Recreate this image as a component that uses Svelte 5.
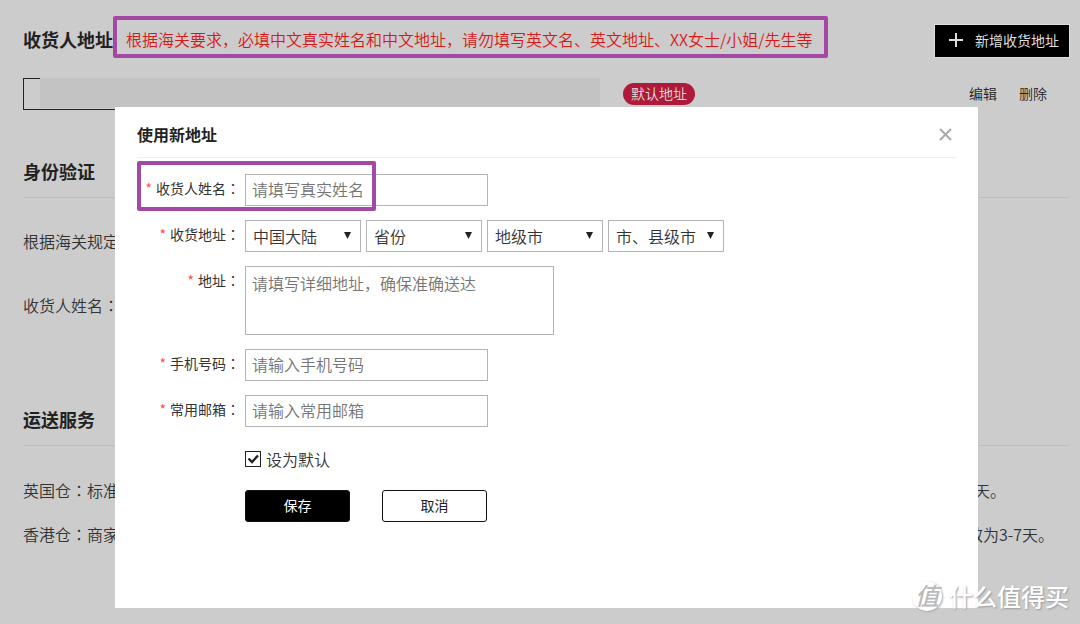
<script lang="ts">
  const regions = [
    { id: 'country', label: '国家', value: '中国大陆' },
    { id: 'province', label: '省份', value: '省份' },
    { id: 'city', label: '地级市', value: '地级市' },
    { id: 'county', label: '市、县级市', value: '市、县级市' },
  ];

  let name = $state('');
  let detail = $state('');
  let phone = $state('');
  let email = $state('');
  let isDefault = $state(true);
  let open = $state(true);

  function close() {
    open = false;
  }

  function save(event: SubmitEvent) {
    event.preventDefault();
    close();
  }
</script>

<svelte:head>
  <title>收货人地址</title>
</svelte:head>

<!-- zh-TW spans centre the colon in its cell -->
<div class="page" lang="zh-CN">
  <header class="page-header">
    <h2>收货人地址</h2>
    <p class="notice">根据海关要求，必填中文真实姓名和中文地址，请勿填写英文名、英文地址、XX女士/小姐/先生等</p>
    <button class="add" type="button" onclick={() => (open = true)}>
      <svg width="14" height="14" viewBox="0 0 14 14" aria-hidden="true">
        <path d="M7 0V14M0 7H14" stroke="#ddd" stroke-width="2" />
      </svg>
      新增收货地址
    </button>
  </header>

  <div class="address">
    <div class="address-box"><span class="redacted"></span></div>
    <span class="badge">默认地址</span>
    <nav class="actions">
      <a href="#edit">编辑</a>
      <a href="#delete">删除</a>
    </nav>
  </div>

  <section class="identity">
    <h2>身份验证</h2>
    <p>根据海关规定</p>
    <p>收货人姓名<span lang="zh-TW">：</span></p>
  </section>

  <section class="shipping">
    <h2>运送服务</h2>
    <p class="uk">
      <span>英国仓<span lang="zh-TW">：</span>标准</span>
      <span>天。</span>
    </p>
    <p class="hk">
      <span>香港仓<span lang="zh-TW">：</span>商家</span>
      <span>效为3-7天。</span>
    </p>
  </section>

  {#if open}
    <div class="overlay">
      <div class="modal" role="dialog" aria-labelledby="modal-title">
        <div class="modal-header">
          <h3 id="modal-title">使用新地址</h3>
          <button class="close" type="button" aria-label="关闭" onclick={close}>
            <svg width="13" height="13" viewBox="0 0 13 13" aria-hidden="true">
              <path d="M1 1L12 12M12 1L1 12" stroke="#aaa" stroke-width="2" />
            </svg>
          </button>
        </div>

        <form onsubmit={save}>
          <div class="row">
            <label for="name"><i>*</i>收货人姓名<span lang="zh-TW">：</span></label>
            <input id="name" class="text" type="text" placeholder="请填写真实姓名" bind:value={name} />
            <span class="highlight"></span>
          </div>
          <div class="row">
            <label for="country"><i>*</i>收货地址<span lang="zh-TW">：</span></label>
            <div class="selects">
              {#each regions as region (region.id)}
                <div class="select">
                  <select id={region.id} aria-label={region.label}>
                    <option>{region.value}</option>
                  </select>
                  <svg width="7" height="7" viewBox="0 0 7 7" aria-hidden="true">
                    <path d="M0 0H7L3.5 7Z" fill="#222" />
                  </svg>
                </div>
              {/each}
            </div>
          </div>
          <div class="row">
            <label for="detail"><i>*</i>地址<span lang="zh-TW">：</span></label>
            <textarea id="detail" placeholder="请填写详细地址，确保准确送达" bind:value={detail}></textarea>
          </div>
          <div class="row">
            <label for="phone"><i>*</i>手机号码<span lang="zh-TW">：</span></label>
            <input id="phone" class="text" type="tel" placeholder="请输入手机号码" bind:value={phone} />
          </div>
          <div class="row">
            <label for="email"><i>*</i>常用邮箱<span lang="zh-TW">：</span></label>
            <input id="email" class="text" type="email" placeholder="请输入常用邮箱" bind:value={email} />
          </div>

          <div class="default">
            <span class="check">
              <input id="default" type="checkbox" bind:checked={isDefault} />
              {#if isDefault}
                <svg width="16" height="16" viewBox="0 0 16 16" aria-hidden="true">
                  <path d="M3.5 7.5L7 11L13 4.5" fill="none" stroke="#222" stroke-width="2.4" />
                </svg>
              {/if}
            </span>
            <label for="default">设为默认</label>
          </div>

          <div class="buttons">
            <button class="save" type="submit">保存</button>
            <button class="cancel" type="button" onclick={close}>取消</button>
          </div>
        </form>
      </div>
    </div>
  {/if}

  <div class="watermark">
    <span class="logo">值</span>
    <span>什么值得买</span>
  </div>
</div>

<style>
:global(body) {
  margin: 0;
  background: #ccc;
}

.page,
.page button,
.page input,
.page select,
.page textarea {
  font-family: 'Noto Sans CJK SC', sans-serif;
}

.page {
  position: relative;
  box-sizing: border-box;
  min-height: 100vh;
  padding: 16px 11px 16px 23px;
  overflow: hidden;
  color: #333;
  font-size: 16px;
  font-weight: 350;
  line-height: 24px;
}

h2,
h3,
p {
  margin: 0;
}

h2 {
  color: #222;
  font-size: 18px;
  font-weight: 700;
  white-space: nowrap;
}

button,
select {
  cursor: pointer;
}

[lang='zh-TW'] {
  font-family: 'Noto Sans CJK TC', sans-serif;
}

.page-header {
  display: flex;
  align-items: center;
}

.page-header h2 {
  height: 42px;
  line-height: 46px;
}

.notice {
  padding: 7px 11px 3px 9px;
  border: 4px solid #a349a4;
  border-radius: 2px;
  color: #d61a1a;
  white-space: nowrap;
}

.add {
  display: flex;
  align-items: center;
  align-self: flex-end;
  gap: 12px;
  height: 32px;
  margin: 0 0 1px auto;
  padding: 0 10px 2px 14px;
  border: 0;
  outline: 1px solid #ddd;
  background: #000;
  color: #ddd;
  font-size: 14px;
  font-weight: 400;
  white-space: nowrap;
}

.address {
  display: flex;
  align-items: center;
  margin-top: 20px;
}

.address-box {
  position: relative;
  box-sizing: border-box;
  width: 577px;
  height: 32px;
  border: 1px solid #222;
}

.redacted {
  position: absolute;
  inset: -1px -1px 1px 16px;
  background: #c3c3c3;
}

.badge {
  margin-left: 23px;
  padding: 0 8px 2px;
  border-radius: 12px;
  background: #b01a3a;
  color: #ddd;
  font-size: 14px;
  line-height: 20px;
}

.actions {
  display: flex;
  gap: 22px;
  margin-left: auto;
  padding: 0 22px 2px 0;
}

.actions a {
  color: #222;
  font-size: 14px;
  text-decoration: none;
}

section h2 {
  padding-bottom: 2px;
  border-bottom: 1px solid #bdbdbd;
  line-height: 48px;
}

section p {
  white-space: nowrap;
}

.identity {
  margin-top: 37px;
}

.identity p {
  margin-top: 31px;
}

.identity p + p {
  margin-top: 40px;
}

.shipping {
  margin-top: 78px;
}

.shipping p {
  display: flex;
  justify-content: space-between;
  margin-top: 32px;
}

.shipping p + p {
  margin-top: 20px;
}

.uk {
  padding-right: 63px;
}

.hk {
  padding-right: 15px;
}

.overlay {
  position: absolute;
  inset: 0;
  padding: 107px 102px 16px 115px;
}

.modal {
  padding: 0 22px 86px;
  background: #fff;
}

.modal-header {
  box-sizing: border-box;
  display: flex;
  align-items: center;
  justify-content: space-between;
  height: 51px;
  padding-top: 4px;
  border-bottom: 1px solid #eee;
}

h3 {
  color: #222;
  font-size: 16px;
  font-weight: 700;
}

.close {
  display: flex;
  padding: 4px;
  border: 0;
  background: none;
}

form {
  display: flex;
  flex-direction: column;
  gap: 14px;
  padding-top: 16px;
}

.row {
  position: relative;
  display: flex;
  gap: 5px;
}

.row label {
  width: 103px;
  font-size: 14px;
  font-weight: 400;
  line-height: 28px;
  text-align: right;
  white-space: nowrap;
}

.row label i {
  margin-right: 4px;
  color: #ff4d4d;
  font-style: normal;
}

.text,
select,
textarea {
  box-sizing: border-box;
  margin: 0;
  border: 1px solid #b4b4b4;
  border-radius: 0;
  background: #fff;
  color: #333;
  font-size: 16px;
  font-weight: 350;
  outline: 0;
}

.text {
  width: 243px;
  height: 32px;
  padding: 0 6px 2px;
}

.text::placeholder,
textarea::placeholder {
  color: #757575;
  opacity: 1;
}

.highlight {
  position: absolute;
  top: -13px;
  left: 0;
  box-sizing: border-box;
  width: 239px;
  height: 50px;
  border: 4px solid #a349a4;
  border-radius: 2px;
  pointer-events: none;
}

.selects {
  display: flex;
  gap: 5px;
}

.select {
  position: relative;
}

.select svg {
  position: absolute;
  top: 12px;
  right: 10px;
  pointer-events: none;
}

select {
  width: 116px;
  height: 32px;
  padding: 0 7px;
  appearance: none;
}

textarea {
  width: 309px;
  height: 69px;
  padding: 4px 6px;
  line-height: 24px;
  resize: none;
}

.default {
  display: flex;
  align-items: center;
  gap: 5px;
  margin: 6px 0 5px;
  padding-left: 108px;
}

.check {
  position: relative;
  display: flex;
}

.check input {
  box-sizing: border-box;
  width: 16px;
  height: 16px;
  margin: 0;
  border: 1px solid #222;
  background: #fff;
  appearance: none;
}

.check svg {
  position: absolute;
  inset: 0;
  pointer-events: none;
}

.buttons {
  display: flex;
  gap: 32px;
  padding-left: 108px;
}

.buttons button {
  width: 105px;
  height: 32px;
  padding: 0 0 2px;
  border: 1px solid #111;
  border-radius: 3px;
  font-size: 14px;
  font-weight: 400;
}

.save {
  background: #000;
  color: #fff;
}

.cancel {
  background: #fff;
  color: #222;
}

.watermark {
  position: absolute;
  right: 11px;
  bottom: 10px;
  display: flex;
  align-items: center;
  gap: 7px;
  color: #fff;
  font-size: 24px;
  font-weight: 500;
  line-height: 36px;
  text-shadow: 1px 1px 2px #999;
}

.logo {
  width: 30px;
  height: 30px;
  border-radius: 50%;
  background: #fff;
  box-shadow: 1px 1px 2px #aaa;
  color: #bbb;
  font-style: italic;
  line-height: 28px;
  text-align: center;
  text-shadow: none;
}
</style>
